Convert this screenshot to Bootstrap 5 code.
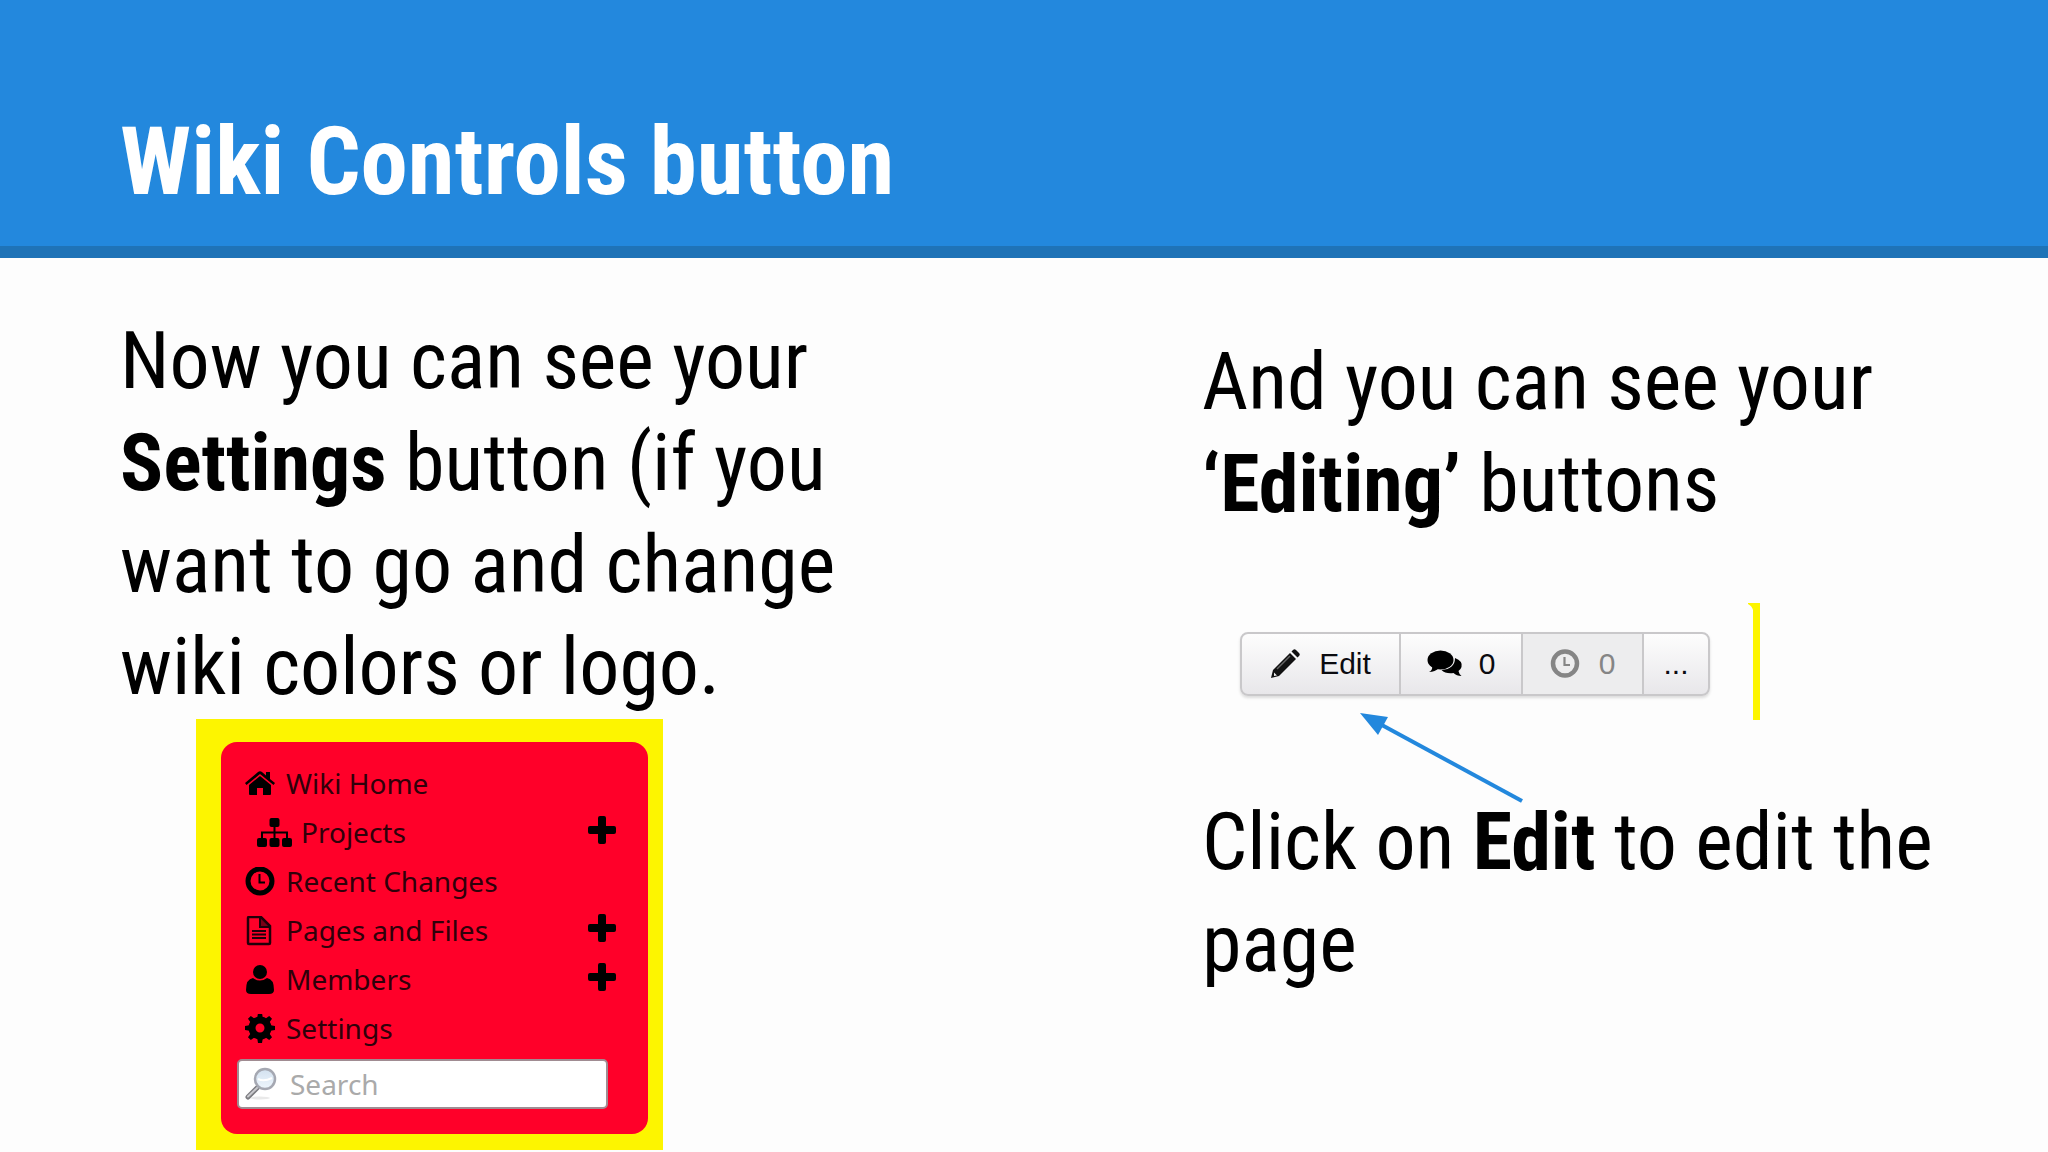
<!DOCTYPE html>
<html lang="en">
<head>
<meta charset="utf-8">
<meta name="viewport" content="width=device-width, initial-scale=1">
<title>Wiki Controls button</title>
<link href="https://cdn.jsdelivr.net/npm/bootstrap@5.3.0/dist/css/bootstrap.min.css" rel="stylesheet">
<style>
  body { background: #fdfdfd; color: #000; font-family: "Roboto Condensed", Lato, sans-serif; }
  .slide-head { background: #2388dd; border-bottom: 12px solid #1f73b7; padding: 107px 120px 29px; }
  .slide-head h1 { color: #fff; font-size: 95px; line-height: 110px; font-weight: 700; }
  .slide-body { padding-left: 120px; }
  .col-left { flex: 0 0 1082px; padding-top: 52px; }
  .col-right { flex: 1 1 0; padding-top: 73px; }
  .slide-text { font-size: 80px; line-height: 102px; margin: 0; font-weight: 400; }
  .slide-text strong { font-weight: 700; }
  .wiki-frame { background: #fdf500; width: 467px; margin: 1px 0 0 76px; padding: 23px 15px 16px 25px; }
  .wiki-menu { background: #ff0029; border-radius: 16px; padding: 17px 40px 25px 16px; font-family: "Noto Sans", sans-serif; font-size: 28px; }
  .wiki-menu li { height: 49px; padding: 0 0 0 8px; }
  .wiki-menu li.nested { padding-left: 20px; }
  .wiki-menu a { color: #30000a; text-decoration: none; line-height: 49px; }
  .wiki-menu svg { flex: none; margin-right: 11px; }
  .wiki-menu .nested svg { margin-right: 9px; }
  .wiki-menu .plus-btn { width: 28px; height: 28px; padding: 0; border: 0; background: none; display: flex; margin: 0 -8px 6px auto; }
  .wiki-menu .plus-btn svg { margin: 0; }
  .search-box { background: #fff; border: 2px solid #a08c92; border-radius: 5px; height: 50px; margin-top: 6px; padding-left: 6px; }
  .search-box input { border: 0; outline: 0; background: none; width: 100%; padding: 0; color: #555; }
  .search-box input::placeholder { color: #aaa; opacity: 1; }
  .search-box label { display: flex; }
  .edit-shot { margin: 68px 0 71px 38px; height: 117px; width: 520px; }
  .edit-bar { height: 64px; box-shadow: 0 2px 3px #0002; border-radius: 8px; margin-top: 29px; }
  .edit-bar .btn { display: flex; align-items: center; justify-content: center; border: 2px solid #c9c8ca; border-radius: 8px; padding: 0; background: linear-gradient(#fdfdfd, #e8e7ea); color: #0b0b10; font-family: "Liberation Sans", sans-serif; font-size: 30px; line-height: 36px; opacity: 1; }
  .edit-bar .btn:disabled { background: #ededee; color: #858585; }
  .edit-bar.btn-group > .btn:not(:first-child) { margin-left: -2px; }
  .btn-edit { width: 161px; gap: 19px; }
  .btn-talk { width: 124px; gap: 16px; }
  .btn-hist { width: 123px; gap: 19px; }
  .btn-more { width: 68px; }
  .arrow { position: absolute; left: 158px; top: 454px; }
</style>
</head>
<body>
<header class="slide-head"><h1 class="m-0">Wiki Controls button</h1></header>
<main class="slide-body d-flex">
  <section class="col-left">
    <p class="slide-text">Now you can see your<br><strong>Settings</strong> button (if you<br>want to go and change<br>wiki colors or logo.</p>
    <div class="wiki-frame">
      <nav class="wiki-menu" aria-label="Wiki">
        <ul class="list-unstyled m-0">
          <li class="d-flex align-items-center"><svg width="30" height="30" viewBox="0 0 30 30" aria-hidden="true"><path d="M4 16 15 7l11 9v9q0 1-1 1h-7v-7h-6v7H5q-1 0-1-1z"/><path d="M0 14 13 3q2-1.500 4 0l4 3.500V3h4v7l5 4-1.500 2L15 5 1.500 16z"/></svg><a href="#">Wiki Home</a></li>
          <li class="nested d-flex align-items-center"><svg width="35" height="30" viewBox="0 0 35 30" aria-hidden="true"><rect x="12.500" y="0" width="10" height="9" rx="2"/><path d="M17.500 8v12M5 21v-6.500h25V21" fill="none" stroke="#000" stroke-width="2"/><rect x="0" y="20" width="10" height="9" rx="2"/><rect x="12.500" y="20" width="10" height="9" rx="2"/><rect x="25" y="20" width="10" height="9" rx="2"/></svg><a href="#">Projects</a><button class="plus-btn" type="button" aria-label="Add project"><svg width="28" height="28" viewBox="0 0 28 28"><path d="M12 0h4q2 0 2 2v8h8q2 0 2 2v4q0 2-2 2h-8v8q0 2-2 2h-4q-2 0-2-2v-8H2q-2 0-2-2v-4q0-2 2-2h8V2q0-2 2-2z"/></svg></button></li>
          <li class="d-flex align-items-center"><svg width="30" height="30" viewBox="0 0 30 30" aria-hidden="true"><circle cx="15" cy="14" r="12" fill="none" stroke="#000" stroke-width="5"/><path d="M14.500 7v8.500h5.500" fill="none" stroke="#000" stroke-width="2"/></svg><a href="#">Recent Changes</a></li>
          <li class="d-flex align-items-center"><svg width="30" height="30" viewBox="0 0 30 30" aria-hidden="true"><g fill="none" stroke="#20000a" stroke-width="2.500"><path d="M4 1h12l9 9v17q0 1-1 1H4q-1 0-1-1V2q0-1 1-1z"/><path d="M15 1v10h10M7 15h14M7 18.500h14M7 22h14" stroke-width="2"/></g><path d="M15 1h2l8 8v2H15z" fill="#20000a" opacity=".6"/></svg><a href="#">Pages and Files</a><button class="plus-btn" type="button" aria-label="Add page"><svg width="28" height="28" viewBox="0 0 28 28"><path d="M12 0h4q2 0 2 2v8h8q2 0 2 2v4q0 2-2 2h-8v8q0 2-2 2h-4q-2 0-2-2v-8H2q-2 0-2-2v-4q0-2 2-2h8V2q0-2 2-2z"/></svg></button></li>
          <li class="d-flex align-items-center"><svg width="30" height="30" viewBox="0 0 30 30" aria-hidden="true"><circle cx="15" cy="7" r="7"/><path d="M8 13q7 5 14 0 7 1 7 12 0 4-5 4H6q-5 0-5-4Q1 14 8 13z"/></svg><a href="#">Members</a><button class="plus-btn" type="button" aria-label="Add member"><svg width="28" height="28" viewBox="0 0 28 28"><path d="M12 0h4q2 0 2 2v8h8q2 0 2 2v4q0 2-2 2h-8v8q0 2-2 2h-4q-2 0-2-2v-8H2q-2 0-2-2v-4q0-2 2-2h8V2q0-2 2-2z"/></svg></button></li>
          <li class="d-flex align-items-center"><svg width="30" height="30" viewBox="0 0 30 30" aria-hidden="true"><g transform="translate(15 14)"><circle r="8" fill="none" stroke="#000" stroke-width="7"/><path d="M-3-9-2-15h4l1 6zM-3 9l1 6h4l1-6zM-9-3l-6 1v4l6 1zM9-3l6 1v4L9 3z"/><path transform="rotate(45)" d="M-3-9-2-15h4l1 6zM-3 9l1 6h4l1-6zM-9-3l-6 1v4l6 1zM9-3l6 1v4L9 3z"/></g></svg><a href="#">Settings</a></li>
        </ul>
        <div class="search-box d-flex align-items-center">
          <label for="wiki-search"><svg width="34" height="34" viewBox="0 0 34 34" role="img" aria-label="Search"><defs><linearGradient id="lens" x1="0" y1="0" x2="0" y2="1"><stop offset="0" stop-color="#d3e1ef"/><stop offset="1" stop-color="#eef6fd"/></linearGradient></defs><ellipse cx="15" cy="31" rx="10" ry="1.500" fill="#e9e9e9"/><path d="M13 20 3 30" stroke="#7c7c80" stroke-width="5" stroke-linecap="round"/><path d="M13 20 3 29.500" stroke="#c9c9cd" stroke-width="2" stroke-linecap="round"/><circle cx="20" cy="12" r="10" fill="url(#lens)" stroke="#a5a8b2" stroke-width="2.500"/><path d="M13 12q6 3 14-1" fill="none" stroke="#fff" stroke-width="2"/></svg></label>
          <input id="wiki-search" type="text" placeholder="Search">
        </div>
      </nav>
    </div>
  </section>
  <section class="col-right position-relative">
    <p class="slide-text">And you can see your<br><strong>‘Editing’</strong> buttons</p>
    <div class="edit-shot d-flex justify-content-between">
      <div class="edit-bar btn-group" role="group" aria-label="Page controls">
        <button type="button" class="btn btn-edit"><svg width="30" height="30" viewBox="0 0 30 30" aria-hidden="true"><path d="M20 4 26 10 9 27 1 29 3 21z" fill="#111"/><path d="m21.500 2.500 1.500-1.500q1.500-1.500 3 0l3 3q1.500 1.500 0 3L27.500 8.500z" fill="#111"/><path d="M7 20 20 7" stroke="#666" stroke-width="1.500"/><path d="m4 23.500 3 3-3 .5z" fill="#eee"/></svg>Edit</button>
        <button type="button" class="btn btn-talk"><svg width="36" height="30" viewBox="0 0 36 30" aria-hidden="true"><path d="M28 9q8 3 6.500 9-.5 2-3 4 .5 3 3 5-5 0-8-3-8 1-12-3Q28 20 28 9z"/><ellipse cx="13.500" cy="11" rx="13" ry="9.500"/><path d="M5 17q1 4-3 6 6 0 10-4z"/></svg>0</button>
        <button type="button" class="btn btn-hist" disabled><svg width="30" height="30" viewBox="0 0 30 30" aria-hidden="true"><g fill="none" stroke="#858585"><circle cx="15" cy="14.500" r="12" stroke-width="4.500"/><path d="M14.500 8v8h5.500" stroke-width="2.200"/></g></svg>0</button>
        <button type="button" class="btn btn-more" aria-label="More">...</button>
      </div>
      <svg width="12" height="117" viewBox="0 0 12 117" aria-hidden="true"><path d="M0 0h12v117H5V7Q4 3 0 1z" fill="#fdf500"/></svg>
    </div>
    <p class="slide-text">Click on <strong>Edit</strong> to edit the<br>page</p>
    <svg class="arrow" width="164" height="92" viewBox="0 0 164 92" aria-hidden="true"><path d="M20 12 162 89" stroke="#2388dd" stroke-width="4"/><path d="M0 1 28 5 18 23z" fill="#2388dd"/></svg>
  </section>
</main>
<script src="https://cdn.jsdelivr.net/npm/bootstrap@5.3.0/dist/js/bootstrap.bundle.min.js"></script>
</body>
</html>
